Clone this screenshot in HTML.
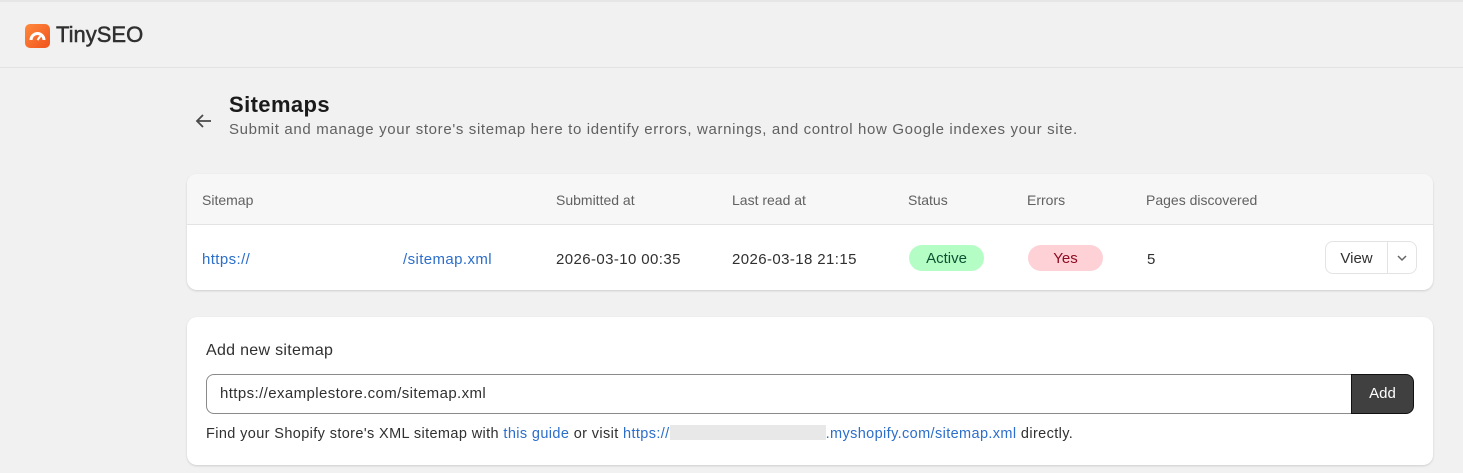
<!DOCTYPE html>
<html><head><style>
body{margin:0;width:1463px;height:473px;background:#f1f1f1;font-family:"Liberation Sans",sans-serif;color:#303030;position:relative;overflow:hidden;font-size:14px}
.top{position:absolute;left:0;top:0;width:1463px;height:68px;border-bottom:1px solid #e3e3e3;border-top:2px solid #e6e6e6;box-sizing:border-box}
.logo{position:absolute;left:25px;top:24px;width:25px;height:24px;border-radius:5px;background:linear-gradient(135deg,#ff8a3d,#f0521c)}
.brand{position:absolute;left:56px;top:22px;font-size:22px;color:#303030;-webkit-text-stroke:0.5px #303030}
.a{position:absolute;white-space:nowrap}
.card{position:absolute;background:#fff;border-radius:10px;box-shadow:0 1px 2px rgba(0,0,0,.15)}
.link{color:#2c6ecb}
.pill{position:absolute;height:26px;border-radius:13px;text-align:center;line-height:28px;font-size:14px}
.r{font-size:15px;letter-spacing:0.4px}
</style></head><body>
<div class="top"></div>
<div class="logo"><svg width="25" height="24" viewBox="0 0 25 24"><path d="M6 16a6.5 6.5 0 0 1 13 0" stroke="#fff" stroke-width="3" fill="none"/><path d="M12.5 16l3-4" stroke="#fff" stroke-width="2"/></svg></div>
<div class="brand">TinySEO</div>
<svg class="a" style="left:195px;top:113px" width="18" height="16" viewBox="0 0 18 16"><path d="M16 8H2M8 2L2 8l6 6" stroke="#4a4a4a" stroke-width="1.8" fill="none"/></svg>
<div class="a" style="left:229px;top:92px;font-size:22px;font-weight:bold;color:#1a1a1a;letter-spacing:0.4px">Sitemaps</div>
<div class="a" style="left:229px;top:121px;font-size:15px;color:#616161;letter-spacing:0.65px">Submit and manage your store's sitemap here to identify errors, warnings, and control how Google indexes your site.</div>
<div class="card" style="left:187px;top:174px;width:1246px;height:116px;overflow:hidden">
 <div style="height:50px;background:#f7f7f7;border-bottom:1px solid #e3e3e3"></div>
</div>
<div class="a" style="left:202px;top:192px;color:#616161">Sitemap</div>
<div class="a" style="left:556px;top:192px;color:#616161">Submitted at</div>
<div class="a" style="left:732px;top:192px;color:#616161">Last read at</div>
<div class="a" style="left:908px;top:192px;color:#616161">Status</div>
<div class="a" style="left:1027px;top:192px;color:#616161">Errors</div>
<div class="a" style="left:1146px;top:192px;color:#616161">Pages discovered</div>
<div class="a link r" style="left:202px;top:251px">https://</div>
<div class="a link r" style="left:403px;top:251px">/sitemap.xml</div>
<div class="a r" style="left:556px;top:251px">2026-03-10 00:35</div>
<div class="a r" style="left:732px;top:251px">2026-03-18 21:15</div>
<div class="pill" style="left:909px;top:245px;width:75px;background:#b4fec5;color:#0c5132;font-size:15px">Active</div>
<div class="pill" style="left:1028px;top:245px;width:75px;background:#fed1d7;color:#8e0b21;font-size:15px">Yes</div>
<div class="a r" style="left:1147px;top:251px">5</div>
<div class="a" style="left:1325px;top:241px;width:92px;height:33px;border:1px solid #e3e3e3;border-radius:8px;box-sizing:border-box">
 <div style="position:absolute;left:0;top:0;width:61px;line-height:33px;text-align:center;font-size:15px">View</div>
 <div style="position:absolute;left:61px;top:0;width:1px;height:31px;background:#e3e3e3"></div>
 <svg style="position:absolute;left:70px;top:12px" width="12" height="8"><path d="M2 2l4 4 4-4" stroke="#666" stroke-width="1.5" fill="none"/></svg>
</div>
<div class="card" style="left:187px;top:317px;width:1246px;height:148px"></div>
<div class="a" style="left:206px;top:342px;font-size:16px;color:#303030;letter-spacing:0.3px">Add new sitemap</div>
<div class="a" style="left:206px;top:374px;width:1146px;height:40px;border:1px solid #8a8a8a;border-right:none;border-radius:8px 0 0 8px;box-sizing:border-box;line-height:38px;padding-left:13px;font-size:15px;letter-spacing:0.4px">https://examplestore.com/sitemap.xml</div>
<div class="a" style="left:1351px;top:374px;width:63px;height:40px;background:#404040;border:1px solid #111;border-radius:0 8px 8px 0;box-sizing:border-box;color:#fff;text-align:center;line-height:38px;font-size:15px">Add</div>
<div class="a" style="left:206px;top:425px;font-size:14.5px;letter-spacing:0.38px">Find your Shopify store's XML sitemap with <span class="link">this guide</span> or visit <span class="link">https://</span><span style="display:inline-block;width:156px;height:15px;background:#e8e8e8;vertical-align:-2px"></span><span class="link">.myshopify.com/sitemap.xml</span> directly.</div>
</body></html>
